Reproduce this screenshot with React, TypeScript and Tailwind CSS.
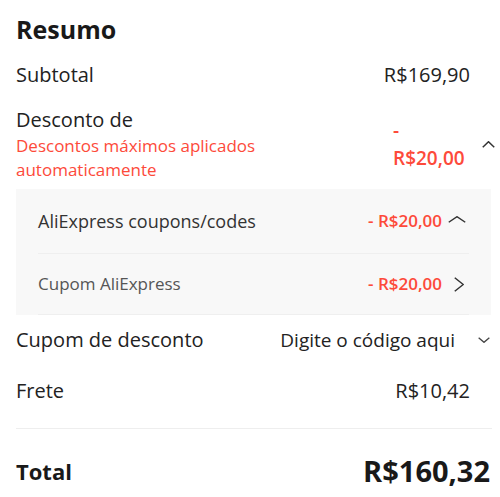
import React from "react";

const ChevronUp = ({ w, h, color = "#333", sw = 1.5 }: { w: number; h: number; color?: string; sw?: number }) => (
  <svg width={w} height={h} viewBox={`0 0 ${w} ${h}`} fill="none" className="block shrink-0">
    <polyline points={`${sw / 2},${h - sw / 2} ${w / 2},${sw / 2} ${w - sw / 2},${h - sw / 2}`} stroke={color} strokeWidth={sw} strokeLinejoin="miter" />
  </svg>
);

const ChevronDown = ({ w, h, color = "#333", sw = 1.3 }: { w: number; h: number; color?: string; sw?: number }) => (
  <svg width={w} height={h} viewBox={`0 0 ${w} ${h}`} fill="none" className="block shrink-0">
    <polyline points={`${sw / 2},${sw / 2} ${w / 2},${h - sw / 2} ${w - sw / 2},${sw / 2}`} stroke={color} strokeWidth={sw} />
  </svg>
);

const ChevronRight = ({ w, h, color = "#333", sw = 1.5 }: { w: number; h: number; color?: string; sw?: number }) => (
  <svg width={w} height={h} viewBox={`0 0 ${w} ${h}`} fill="none" className="block shrink-0">
    <polyline points={`${sw / 2},${sw / 2} ${w - sw / 2},${h / 2} ${sw / 2},${h - sw / 2}`} stroke={color} strokeWidth={sw} />
  </svg>
);

export default function App() {
  return (
    <div className="w-[500px] h-[497px] bg-white pl-4 pr-2 font-['Open_Sans',sans-serif] text-[#222] overflow-hidden">
      <h2 className="pt-[13px] text-[25px] leading-[32px] font-bold text-[#191919]">Resumo</h2>

      <div className="mt-4 flex items-center justify-between text-[20px] leading-[28px]">
        <span>Subtotal</span>
        <span className="mr-[22px]">R$169,90</span>
      </div>

      <div className="mt-[17px] flex items-center justify-between">
        <div>
          <div className="text-[20px] leading-[28px]">Desconto de</div>
          <div className="text-[17px] leading-[24px] text-[#fd4a3a]">
            Descontos máximos aplicados
            <br />
            automaticamente
          </div>
        </div>
        <div className="flex items-center mr-[-3px]">
          <div className="w-[89px] text-[19px] leading-[28px] font-semibold text-[#fd4a3a]">
            <div>-</div>
            <div>R$20,00</div>
          </div>
          <ChevronUp w={13} h={7} />
        </div>
      </div>

      <div className="mt-[7px] bg-[#f8f8f8] px-[22px] mr-[1px]">
        <div className="h-[65px] flex items-center justify-between border-b border-[#efefef]">
          <span className="text-[18px] leading-[24px] font-medium text-[#333]">AliExpress coupons/codes</span>
          <div className="flex items-center">
            <span className="text-[17px] leading-[24px] font-semibold text-[#fd4a3a]">- R$20,00</span>
            <span className="ml-[6px] mr-[3px] mb-[3px]">
              <ChevronUp w={18} h={7} />
            </span>
          </div>
        </div>
        <div className="h-[61px] flex items-center justify-between border-b border-[#efefef]">
          <span className="text-[17px] leading-[24px] text-[#555]">Cupom AliExpress</span>
          <div className="flex items-center">
            <span className="text-[17px] leading-[24px] font-semibold text-[#fd4a3a]">- R$20,00</span>
            <span className="ml-[12px] mr-[5px]">
              <ChevronRight w={10} h={15} />
            </span>
          </div>
        </div>
      </div>

      <div className="mt-[11px] flex items-center justify-between leading-[28px]">
        <span className="text-[20px]">Cupom de desconto</span>
        <div className="flex items-center">
          <span className="text-[19px]">Digite o código aqui</span>
          <span className="ml-[23px] mr-[2px]">
            <ChevronDown w={12} h={6} color="#444" />
          </span>
        </div>
      </div>

      <div className="mt-[23px] flex items-center justify-between text-[20px] leading-[28px]">
        <span>Frete</span>
        <span className="mr-[22px]">R$10,42</span>
      </div>

      <div className="mt-[23px] border-t border-[#eeeeee]" />

      <div className="mt-[24px] flex items-center justify-between h-[36px]">
        <span className="text-[22px] leading-[36px] font-bold text-[#191919]">Total</span>
        <span className="text-[29px] leading-[36px] font-bold text-[#191919] mr-[2px]">R$160,32</span>
      </div>
    </div>
  );
}
